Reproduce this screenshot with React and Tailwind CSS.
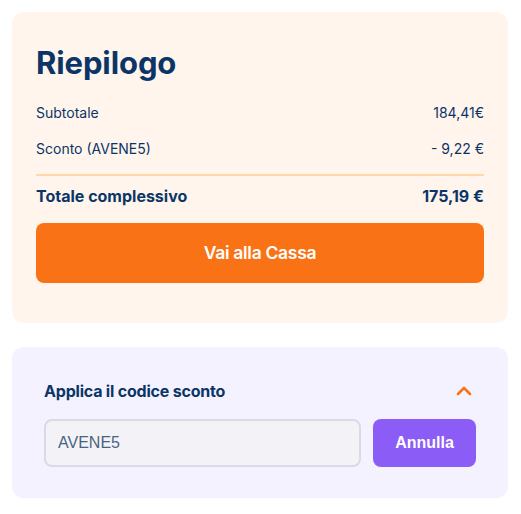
import React from "react";

export default function App() {
  return (
    <div className="w-[521px] bg-white pl-3 pr-[13px] pt-3 pb-3 flex flex-col gap-6" style={{ fontFamily: "Inter, 'Noto Sans', sans-serif" }}>
      <div className="bg-[#fff5ec] rounded-xl px-6 pt-[33px] pb-[40px]">
        <h1 className="text-[31px] leading-9 font-bold text-[#0b3567] tracking-[-0.1px]">Riepilogo</h1>
        <div className="mt-[22px] flex justify-between text-[14px] text-[#0b3567] leading-5">
          <span>Subtotale</span>
          <span>184,41€</span>
        </div>
        <div className="mt-4 flex justify-between text-[14px] text-[#0b3567] leading-5">
          <span>Sconto (AVENE5)</span>
          <span>- 9,22 €</span>
        </div>
        <div className="mt-[15px] h-[2px] bg-[#fed7aa]"></div>
        <div className="mt-[8px] flex justify-between text-[16px] font-bold text-[#0b3567] leading-6">
          <span>Totale complessivo</span>
          <span>175,19 €</span>
        </div>
        <button className="mt-[15px] w-full h-[60px] rounded-lg bg-[#f97316] text-white text-[17.5px] font-semibold tracking-[-0.3px]">
          Vai alla Cassa
        </button>
      </div>
      <div className="bg-[#f4f2fe] rounded-xl px-8 pt-[32px] pb-[31px]">
        <div className="flex items-center justify-between">
          <span className="text-[16px] font-bold text-[#0b3567] leading-6 tracking-[-0.2px]">Applica il codice sconto</span>
          <svg width="24" height="24" viewBox="0 0 24 24" fill="none" stroke="#f97316" strokeWidth="2.6" strokeLinecap="round" strokeLinejoin="round" className="mr-[0px]">
            <path d="M6 15l6-6 6 6" />
          </svg>
        </div>
        <div className="mt-[16px] flex gap-3">
          <div className="flex-1 h-12 rounded-lg border-2 border-[#d6dbe6] bg-[#f3f3f7] flex items-center px-3">
            <span className="text-[16px] text-[#4a6480]" style={{ fontFamily: "'Liberation Sans', Arial, sans-serif" }}>AVENE5</span>
          </div>
          <button className="w-[103px] h-12 rounded-lg bg-[#8b5cf6] text-white text-[16px] font-bold" style={{ fontFamily: "'Liberation Sans', Arial, sans-serif" }}>
            Annulla
          </button>
        </div>
      </div>
    </div>
  );
}
